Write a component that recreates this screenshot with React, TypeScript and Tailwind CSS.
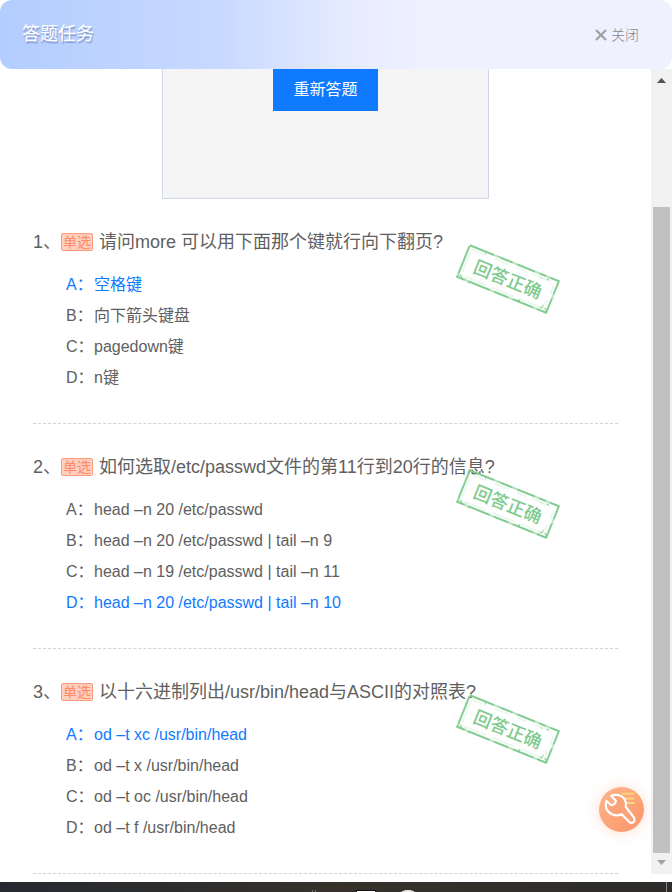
import { useId } from 'react';

type Question = {
  title: string;
  options: string[];
  answer: number;
};

const questions: Question[] = [
  {
    title: '请问more 可以用下面那个键就行向下翻页?',
    options: ['空格键', '向下箭头键盘', 'pagedown键', 'n键'],
    answer: 0,
  },
  {
    title: '如何选取/etc/passwd文件的第11行到20行的信息?',
    options: [
      'head –n 20 /etc/passwd',
      'head –n 20 /etc/passwd | tail –n 9',
      'head –n 19 /etc/passwd | tail –n 11',
      'head –n 20 /etc/passwd | tail –n 10',
    ],
    answer: 3,
  },
  {
    title: '以十六进制列出/usr/bin/head与ASCII的对照表?',
    options: ['od –t xc /usr/bin/head', 'od –t x /usr/bin/head', 'od –t oc /usr/bin/head', 'od –t f /usr/bin/head'],
    answer: 0,
  },
];

const letters = ['A', 'B', 'C', 'D'];

function Stamp() {
  const inkId = useId();

  return (
    <svg className="absolute top-[44px] right-[57px] w-[106px] h-[72px]" viewBox="0 0 106 72" fill="none">
      {/* uneven ink */}
      <filter id={inkId}>
        <feTurbulence type="fractalNoise" baseFrequency="0.35" numOctaves="2" seed="4" result="noise" />
        <feDisplacementMap in="SourceGraphic" in2="noise" scale="2" xChannelSelector="R" yChannelSelector="G" />
      </filter>
      <g transform="translate(53 36) rotate(22)" stroke="#7fcb8f">
        <g filter={`url(#${inkId})`}>
          <rect x="-48" y="-17" width="96" height="34" rx="1" strokeWidth="1.4" opacity="0.75" />
          <path
            d="M-48 -17H-22M-17 -17H-2M3 -17H22M27 -17H34M39 -17H48V-3M48 2V17H38M34 17H12M7 17H-8M-13 17H-36M-40 17H-48V-17"
            strokeWidth="1.8"
          />
          <path
            d="M-45 -14H-28M-20 -14H-4M4 -14H14M20 -14H40M45 -11V-2M44 5V12M41 14H18M12 14H-12M-18 14H-42M-45 11V-12"
            strokeWidth="1"
            opacity="0.3"
          />
          <path d="M40 15l3 -2M45 13l2 2M36 -15l2 1M-46 14l3 2M30 -14l1 1M42 11l1 1" strokeWidth="1.2" />
        </g>
        <text x="0" y="7" textAnchor="middle" fill="#7fcb8f" stroke="none" className="text-[18px] font-medium">
          回答正确
        </text>
      </g>
    </svg>
  );
}

function QuestionItem({ question, index }: { question: Question; index: number }) {
  return (
    <section className="relative pt-[27px] pb-[30px] border-b border-dashed border-[#d2d2d2]">
      <h2 className="flex items-center h-8 text-[18px] font-normal whitespace-nowrap">
        <span className="w-7">{index + 1}、</span>
        <span className="flex items-center justify-center w-8 h-[18px] mr-[6px] rounded-xs border border-[#fb9a77] bg-[#ffd0bf] text-sm leading-none text-[#fc8a62]">
          单选
        </span>
        <span>{question.title}</span>
      </h2>
      <ul className="mt-[11px] pl-[33px] text-base leading-[31px]">
        {question.options.map((option, i) => (
          <li key={option} className={`flex ${i === question.answer ? 'text-[#107aff]' : ''}`}>
            <span className="w-7">{letters[i]}：</span>
            <span>{option}</span>
          </li>
        ))}
      </ul>
      <Stamp />
    </section>
  );
}

function Scrollbar() {
  return (
    <div className="flex flex-col w-[21px] shrink-0 mb-2 bg-[#f1f1f1] px-[2px]">
      <svg className="w-[17px] h-[22px]" viewBox="0 0 17 22">
        <path d="M4 14L8.500 9L13 14Z" fill="#505050" />
      </svg>
      <div className="grow-[116]" />
      <div className="grow-[646] bg-[#c1c1c1]" />
      <svg className="w-[17px] h-[21px]" viewBox="0 0 17 21">
        <path d="M4 7L8.500 12L13 7Z" fill="#a3a3a3" />
      </svg>
    </div>
  );
}

function ToolButton() {
  return (
    <button
      aria-label="工具"
      className="fixed right-[28px] bottom-[60px] w-[45px] h-[45px] rounded-full bg-gradient-to-br from-[#ffb58c] to-[#fb9467] shadow-[0_1px_14px_rgba(252,150,105,0.3)]"
    >
      <svg className="w-full h-full" viewBox="0 0 45 45" fill="none">
        <path d="M23 6.800H35.500M25 11.500H35.500M27 16H35.500" stroke="#fcd57e" strokeWidth="2" />
        <path
          d="M12.200 8.700C17.500 6.600 23.500 8.300 26 13C27 15.200 27.300 17.500 26.700 19.800L35 30.500C36.500 33 35.200 35.700 32.800 36C31.500 36 30.500 35.500 29.500 34.300L22.700 27.200C19.500 28.700 16 28.700 13 27.300C7.500 24.800 5.500 19 7.500 14L12.200 18.200C14.500 18 16.500 16.500 16.900 13.800Z"
          fill="#fca278"
          stroke="white"
          strokeWidth="2.200"
          strokeLinejoin="round"
        />
      </svg>
    </button>
  );
}

export default function App() {
  return (
    <div className="min-h-screen flex flex-col bg-white text-[#606060] font-['Liberation_Sans','Noto_Sans_CJK_SC',sans-serif]">
      <header className="flex items-center justify-between h-[69px] pl-[22px] pr-[33px] rounded-xl bg-[linear-gradient(90deg,#b3cdff_0%,#c8d9ff_33%,#e5ebff_51%,#f0f1ff_64%)]">
        <h1 className="text-[18px] text-white [text-shadow:1px_2px_1px_rgba(70,90,140,0.45)]">答题任务</h1>
        <button className="flex items-center gap-1 text-sm font-light text-[#888]">
          <svg className="w-3 h-3" viewBox="0 0 12 12" fill="none">
            <path d="M1 1L11 11M11 1L1 11" stroke="#a0a0a0" strokeWidth="2.200" />
          </svg>
          关闭
        </button>
      </header>

      <div className="flex flex-1">
        <main className="flex-1 min-w-0 px-[33px] pb-2">
          <div className="w-[327px] h-[130px] mx-auto border border-t-0 border-[#d0d7e5] bg-[#f5f5f5] text-center">
            <button className="h-[42px] px-5 bg-[#107aff] text-base text-white">重新答题</button>
          </div>
          {questions.map((question, index) => (
            <QuestionItem key={question.title} question={question} index={index} />
          ))}
        </main>
        <Scrollbar />
      </div>

      <footer className="h-[10px] bg-gradient-to-r from-[#252a30] via-[#36312b] to-[#2d2c2a]">
        <svg className="w-full h-full" viewBox="0 0 672 10" preserveAspectRatio="xMinYMin slice">
          <path d="M312.500 8V10M315.500 8V10" stroke="#77736d" />
          <path d="M356 8H376V10H356Z" fill="#111" />
          <path d="M357 9H375V10H357Z" fill="white" />
          <ellipse cx="408" cy="12" rx="8" ry="4" fill="#eee" />
          <path d="M666.500 0V10" stroke="#8a8885" />
        </svg>
      </footer>
      <ToolButton />
    </div>
  );
}
